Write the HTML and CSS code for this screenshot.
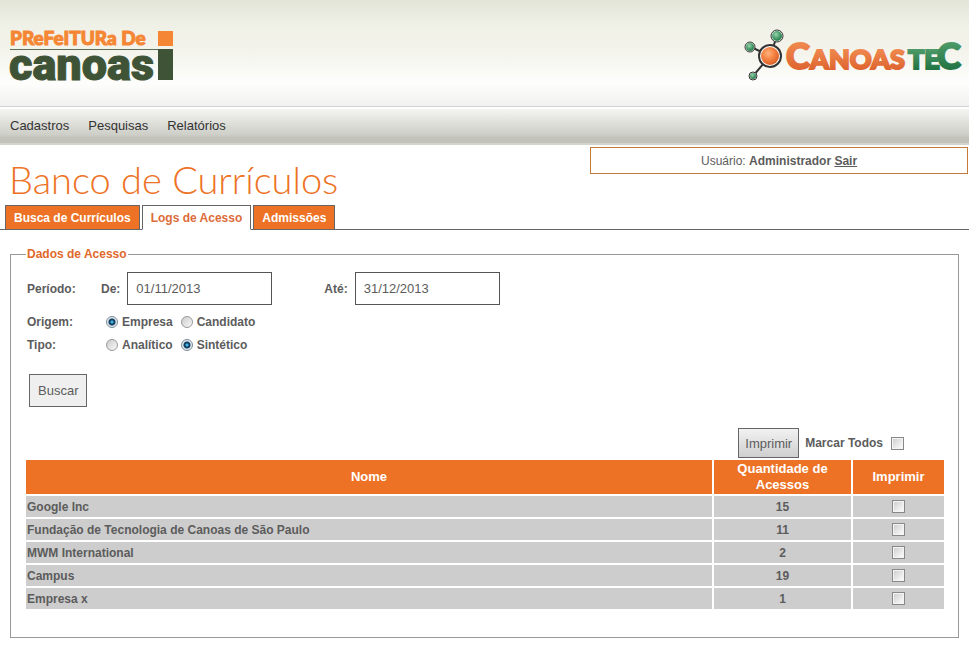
FILE: index.html
```html
<!DOCTYPE html>
<html lang="pt-BR">
<head>
<meta charset="utf-8">
<title>Banco de Currículos</title>
<link rel="stylesheet" href="styles.css">
</head>
<body>
<header class="masthead">
  <svg class="logo-city" viewBox="0 0 166 54" width="166" height="54" role="img" aria-label="Prefeitura de Canoas">
    <text class="city-top" x="2" y="17">PReFeITURa De</text>
    <rect x="150" y="3" width="15" height="15" fill="#f58634"/>
    <path d="M2 21.500H151" stroke="#5c7058"/>
    <text class="city-name" x="1" y="52">canoas</text>
    <rect x="150" y="21" width="15" height="31" fill="#3f5437"/>
  </svg>
  <svg class="logo-tec" viewBox="0 0 220 56" width="220" height="56" role="img" aria-label="CanoasTec">
    <defs>
      <radialGradient id="ballOrange" cx=".4" cy=".35" r=".65">
        <stop offset="0" stop-color="#ffb27c"/><stop offset=".5" stop-color="#f58546"/><stop offset="1" stop-color="#dc6128"/>
      </radialGradient>
      <radialGradient id="ballGreen" cx=".4" cy=".35" r=".65">
        <stop offset="0" stop-color="#9bd3ae"/><stop offset=".5" stop-color="#55a676"/><stop offset="1" stop-color="#28794b"/>
      </radialGradient>
      <linearGradient id="inkOrange" x1="0" y1="0" x2="0" y2="1">
        <stop offset=".2" stop-color="#f08a50"/><stop offset=".9" stop-color="#dd612c"/>
      </linearGradient>
      <linearGradient id="inkGreen" x1="0" y1="0" x2="0" y2="1">
        <stop offset=".2" stop-color="#4f9b6a"/><stop offset=".9" stop-color="#1e703f"/>
      </linearGradient>
    </defs>
    <g stroke="#333" fill="none">
      <path d="M29 28 36 8M29 28 10 19M29 28 12 48" stroke-width="2"/>
      <circle cx="36" cy="8" r="6" fill="#f4f5ef"/><circle cx="9" cy="19" r="5" fill="#f4f5ef"/>
      <circle cx="12" cy="48" r="4" fill="#f4f5ef"/><circle cx="29" cy="28" r="11" fill="#fafaf8" stroke-width="2"/>
    </g>
    <circle cx="36" cy="8" r="5" fill="url(#ballGreen)"/>
    <circle cx="9" cy="19" r="4" fill="url(#ballGreen)"/>
    <circle cx="12" cy="48" r="3" fill="url(#ballGreen)"/>
    <circle cx="29" cy="28" r="9" fill="url(#ballOrange)"/>
    <text class="tec-big tec-orange" x="45" y="41">C</text>
    <text class="tec-small tec-orange" x="69" y="41">ANOAS</text>
    <text class="tec-small tec-green" x="167" y="41">TE</text>
    <text class="tec-big tec-green" x="196" y="41">C</text>
  </svg>
</header>

<nav class="menu">
  <a href="#cadastros">Cadastros</a>
  <a href="#pesquisas">Pesquisas</a>
  <a href="#relatorios">Relatórios</a>
</nav>

<div class="heading">
  <h1>Banco de Currículos</h1>
  <p class="user">Usuário: <b>Administrador <a href="#sair">Sair</a></b></p>
</div>

<nav class="tabs">
  <a href="#busca">Busca de Currículos</a>
  <a class="current" href="#logs">Logs de Acesso</a>
  <a href="#admissoes">Admissões</a>
</nav>

<form>
  <fieldset>
    <legend>Dados de Acesso</legend>
    <div class="row period">
      <span class="name">Período:</span>
      <label for="from">De:</label>
      <input class="date" id="from" type="text" value="01/11/2013">
      <label class="until" for="to">Até:</label>
      <input class="date" id="to" type="text" value="31/12/2013">
    </div>
    <div class="row">
      <span class="name">Origem:</span>
      <div class="options">
        <label><input type="radio" name="origem" checked>Empresa</label>
        <label><input type="radio" name="origem">Candidato</label>
      </div>
    </div>
    <div class="row">
      <span class="name">Tipo:</span>
      <div class="options">
        <label><input type="radio" name="tipo">Analítico</label>
        <label><input type="radio" name="tipo" checked>Sintético</label>
      </div>
    </div>
    <button class="search" type="submit">Buscar</button>

    <div class="actions">
      <button class="print" type="button">Imprimir</button>
      <label for="all">Marcar Todos</label>
      <input id="all" type="checkbox">
    </div>
    <table>
      <colgroup><col><col class="count"><col class="mark"></colgroup>
      <thead>
        <tr><th>Nome</th><th>Quantidade de Acessos</th><th>Imprimir</th></tr>
      </thead>
      <tbody>
        <tr><td>Google Inc</td><td>15</td><td><input type="checkbox" aria-label="Imprimir Google Inc"></td></tr>
        <tr><td>Fundação de Tecnologia de Canoas de São Paulo</td><td>11</td><td><input type="checkbox" aria-label="Imprimir Fundação de Tecnologia de Canoas de São Paulo"></td></tr>
        <tr><td>MWM International</td><td>2</td><td><input type="checkbox" aria-label="Imprimir MWM International"></td></tr>
        <tr><td>Campus</td><td>19</td><td><input type="checkbox" aria-label="Imprimir Campus"></td></tr>
        <tr><td>Empresa x</td><td>1</td><td><input type="checkbox" aria-label="Imprimir Empresa x"></td></tr>
      </tbody>
    </table>
  </fieldset>
</form>
</body>
</html>
```

FILE: styles.css
```css
* { box-sizing: border-box; }

body {
  margin: 0;
  background: #fff;
  color: #5c5c5c;
  font: 12px/16px "Liberation Sans", Arial, sans-serif;
}

.masthead {
  display: flex;
  justify-content: space-between;
  align-items: flex-start;
  height: 107px;
  padding: 28px 8px;
  border-bottom: 1px solid #d2d2d2;
  background: linear-gradient(#e3e4d8 0, #eff0e5 22px, #f3f3eb 48px, #fdfdfc 84px, #f1f1f1 106px);
}

svg { overflow: visible; }
.city-top { font: 900 19px Lato, sans-serif; fill: #f58634; stroke: #f58634; stroke-width: 1px; }
.city-name {
  font: 900 45px Roboto, sans-serif;
  fill: #3f5437;
  stroke: #3f5437;
  stroke-width: 1px;
}
.tec-big { font: 900 36px Lato, sans-serif; stroke-width: 2px; }
.tec-small { font: 900 27px Lato, sans-serif; stroke-width: 2px; }
.tec-orange { fill: url(#inkOrange); stroke: url(#inkOrange); }
.tec-green { fill: url(#inkGreen); stroke: url(#inkGreen); }

.menu {
  display: flex;
  gap: 19px;
  margin-top: 2px;
  padding: 9px 10px;
  border-bottom: 2px solid #d4d4cf;
  background: linear-gradient(#f4f4f1, #d6d6d0 60%, #cfcfc9 75%, #c2c2ba 85%, #c2c2ba);
}
.menu a { color: #333; font-size: 13px; text-decoration: none; }

.heading {
  display: flex;
  justify-content: space-between;
  align-items: flex-start;
  padding: 2px 1px 0 9px;
}
h1 {
  margin: 11px 0 5px;
  color: #ed7225;
  font: 300 38px/42px Lato, sans-serif;
}
.user {
  width: 39vw;
  margin: 0;
  padding: 5px 0 4px;
  border: 1px solid #c67a3a;
  text-align: center;
}
.user a { color: inherit; }

.tabs {
  display: flex;
  align-items: flex-end;
  gap: 2px;
  padding: 0 5px;
  border-bottom: 1px solid #666;
}
.tabs a {
  margin-bottom: -1px;
  padding: 4px 8px 3px;
  border: 1px solid #666;
  background: #ed7225;
  color: #fff;
  font-weight: bold;
  text-decoration: none;
}
.tabs .current {
  border-bottom-color: #fff;
  background: #fff;
  color: #dc6c3a;
}

fieldset {
  min-width: 0;
  margin: 16px 10px 15px;
  padding: 10px 14px 26px 15px;
  border: 1px solid #999;
  font-weight: bold;
}
legend { padding: 0 1px; color: #e06a2b; }

.row { display: flex; align-items: center; min-height: 23px; padding-left: 1px; }
.period { min-height: 33px; margin-bottom: 5px; }
.name { width: 74px; }
.date {
  width: 145px;
  height: 33px;
  margin: 0 0 0 7px;
  padding: 0 8px;
  border: 1px solid #555;
  color: #5c5c5c;
  font: 13px "Liberation Sans", Arial, sans-serif;
}
.until { margin-left: 52px; }
.options { display: flex; gap: 8px; padding-left: 5px; }
.options label { display: flex; align-items: center; gap: 4px; }

input[type="radio"] {
  appearance: none;
  width: 12px;
  height: 12px;
  margin: 0;
  border: 1px solid #999;
  border-radius: 50%;
  background: linear-gradient(135deg, #ccc, #f8f8f8);
}
input[type="radio"]:checked {
  border-color: #7d8c98;
  background: radial-gradient(circle, #45b5e8 0 1px, #123e60 2px 3px, #dde8ee 4px);
}
input[type="checkbox"] {
  appearance: none;
  display: block;
  width: 13px;
  height: 13px;
  margin: 0;
  border: 1px solid #888;
  background: linear-gradient(135deg, #ccc, #fff);
  box-shadow: inset 0 0 0 1px #f4f4f4;
}

button {
  margin: 0;
  border: 1px solid #666;
  color: #5c5c5c;
  font: 13px "Liberation Sans", Arial, sans-serif;
}
.search { height: 33px; margin: 18px 3px 21px; padding: 0 8px; background: #efefef; }
.print { height: 30px; padding: 0 6px; background: linear-gradient(#f2f2f2, #cfcfcf); }

.actions {
  display: flex;
  align-items: center;
  justify-content: flex-end;
  margin-bottom: 2px;
  padding-right: 40px;
}
.actions label { margin: 0 8px 0 6px; }

table { width: 100%; border-collapse: collapse; }
.count { width: 139px; }
.mark { width: 92px; }
th, td { border: 2px solid #fff; border-top: 0; }
th:first-child, td:first-child { border-left: 0; }
th:last-child, td:last-child { border-right: 0; }
th { height: 35px; padding: 0 20px; background: #ed7225; color: #fff; font-size: 13px; }
th:last-child { padding: 0; }
td { height: 23px; padding: 0 1px; background: #cdcdcd; text-align: center; }
td:first-child { text-align: left; }
td input[type="checkbox"] { margin: 0 auto; }
```
